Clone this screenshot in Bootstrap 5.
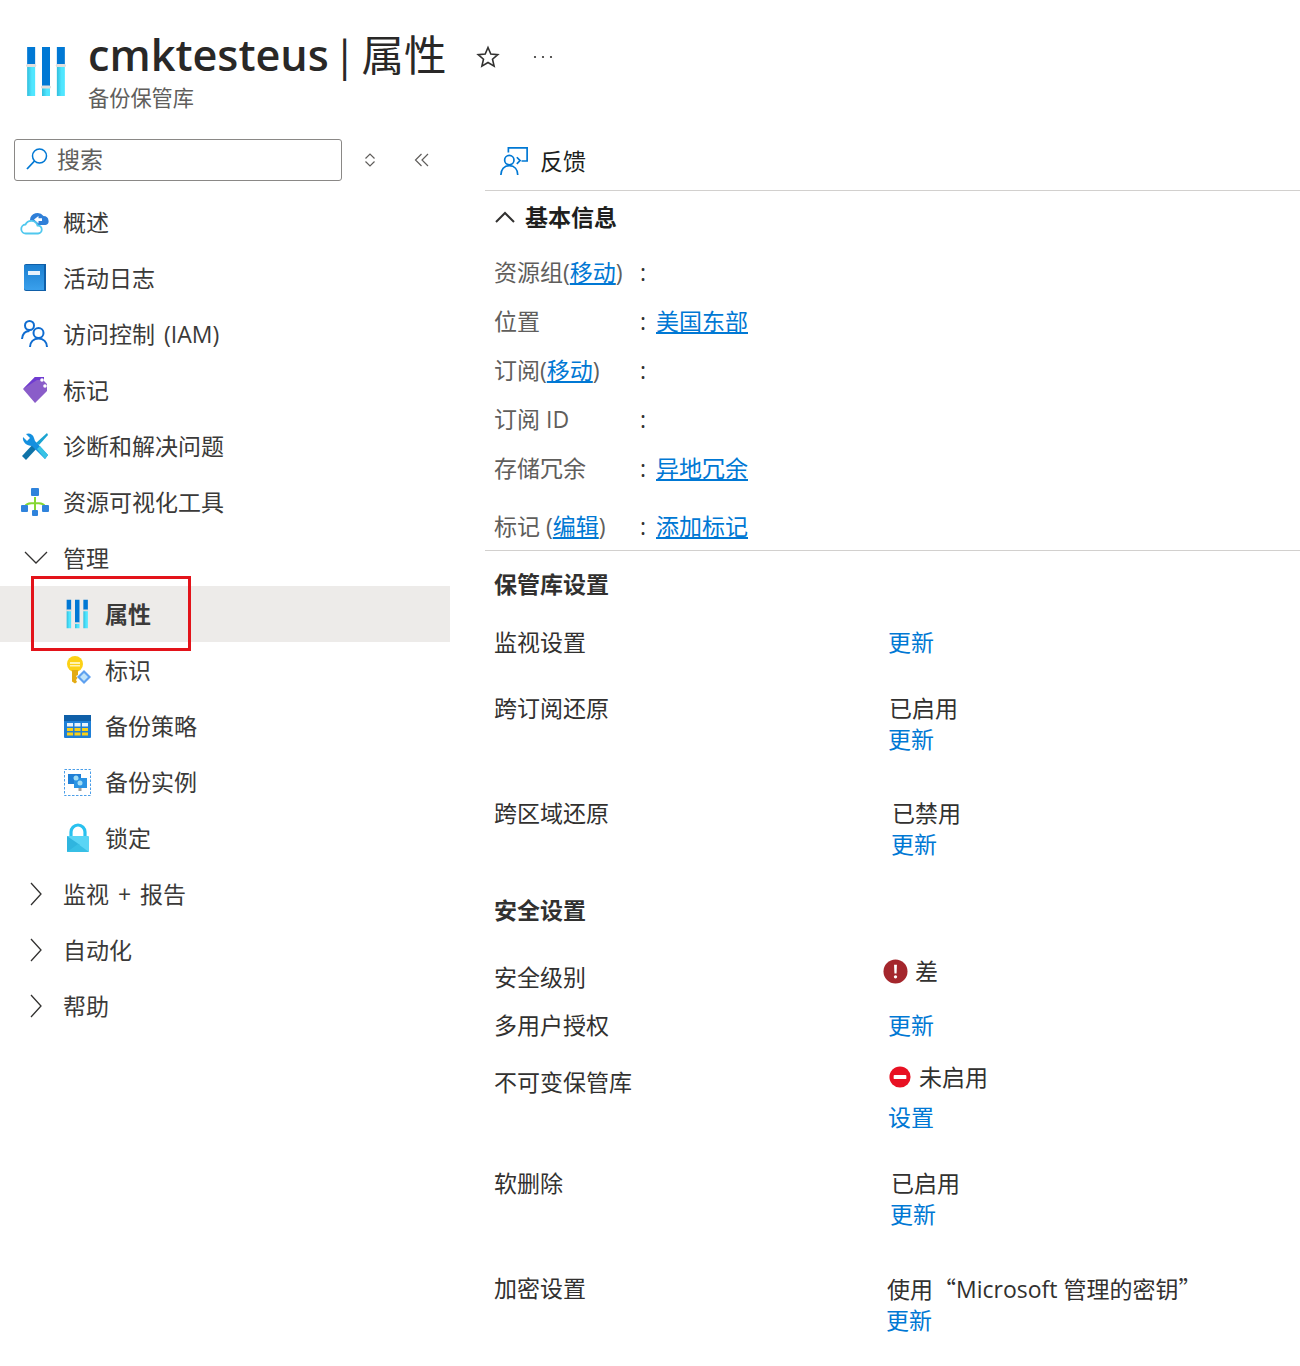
<!DOCTYPE html>
<html lang="zh-CN">
<head>
<meta charset="utf-8">
<title>cmktesteus | 属性</title>
<link href="https://cdn.jsdelivr.net/npm/bootstrap@5.3.0/dist/css/bootstrap.min.css" rel="stylesheet">
<style>
html,body{background:#fff}
body{font-family:"Open Sans","Noto Sans CJK SC",sans-serif;font-size:23px;line-height:30px;color:#323130;width:1300px;height:1366px;overflow:hidden}
a{color:#0078d4}
.page-head{height:139px;padding:33px 0 0 26px}
.vault-logo{margin-top:14px;flex:none}
.page-title{font-size:43.2px;line-height:44px;font-weight:600;margin:0;color:#292827}
.title-thin{font-weight:400;font-size:42.5px;word-spacing:-6px;margin-left:-7px}
.page-sub{font-size:21.2px;line-height:30px;color:#605e5c;margin-top:6px}
.head-text{margin-left:22px}
.head-actions{margin-left:30px;padding-top:8px;gap:32px}
.side-col{width:450px;flex:none}
.main-col{width:815px;margin-left:35px;flex:none}
.search-row{height:42px;padding-left:14px}
.search-box{width:328px;height:42px;border:1px solid #8a8886;border-radius:3px;padding:0 0 2px 10px;color:#605e5c;gap:8px}
.search-tools{margin-left:21px;gap:37px}
.side-list{margin-top:13px;position:relative}
.side-item{height:56px;padding-left:20px;color:#3b3a39;word-spacing:3px}
.side-item.sub-item{padding-left:63px}
.side-item.is-active{background:#edebe9;font-weight:700}
.side-ico{width:30px;height:30px;flex:none;margin-right:13px}
.sub-item .side-ico{margin-right:12px}
.red-mark{position:absolute;left:31px;top:382px;width:160px;height:75px;border:3px solid #e3131a;pointer-events:none}
.tool-row{height:52px;border-bottom:1px solid #d2d0ce;padding:0 0 8px 14px;gap:11px;color:#201f1e}
.group-head{height:52px;padding-left:9px;gap:9px;font-weight:700;color:#201f1e}
.basic-list{padding-left:9px;padding-bottom:9px;border-bottom:1px solid #d2d0ce;margin-top:14px}
.basic-row{height:49px;color:#605e5c}
.basic-row a{text-decoration:underline}
.basic-row.last-basic{height:30px;margin-top:9px}
.basic-key{width:146px;flex:none}
.basic-sep{width:16px;flex:none;color:#323130}
.set-list{padding-left:9px}
.sec-title{font-weight:700;color:#323130;height:76px;padding-top:18px}
.sec-title.tight{height:67px;padding-top:0}
.set-row{color:#323130}
.set-key{width:394px;flex:none}
.two-line>a{display:block;margin-top:1px}
.h48{height:48px}.h57{height:57px}.h66{height:66px}.h97{height:97px}.h101{height:101px}.h105{height:105px}
.nudge-up{margin-top:-5px}
.nudge-up-more{margin-top:-6px}
.nudge-gap{margin-top:10px}
.sl1{margin-left:1px}.sl2{margin-left:2px}.sl3{margin-left:3px}.slm2{margin-left:-2px}.slm5{margin-left:-5px}
.st-icon{width:25px;height:25px;flex:none;margin-right:7px}
.st-icon.wide{width:22px;height:22px;margin-right:8px}
.cjk-q{font-family:"Noto Sans CJK SC",sans-serif}
</style>
</head>
<body>
<svg width="0" height="0" class="position-absolute" aria-hidden="true">
<defs>
<linearGradient id="lg" x1="0" y1="0" x2="1" y2="0"><stop offset="0" stop-color="#32bedd"/><stop offset=".6" stop-color="#50e6ff"/></linearGradient>
<linearGradient id="bookg" x1="0" y1="0" x2="0" y2="1"><stop offset="0" stop-color="#1b7fd0"/><stop offset="1" stop-color="#3aa0ec"/></linearGradient>
<symbol id="vault" viewBox="-1 0 35 49" preserveAspectRatio="none">
<rect x="0" y="0" width="7" height="18" fill="#0078d4"/><rect x="0" y="18" width="7" height="31" fill="url(#lg)"/>
<rect x="-1" y="17" width="9" height="3" rx="1.500" fill="#e1dfdd"/>
<rect x="13" y="0" width="7" height="40" fill="#0078d4"/><rect x="13" y="40" width="7" height="9" fill="url(#lg)"/>
<rect x="12" y="38.500" width="9" height="3" rx="1.500" fill="#e1dfdd"/>
<rect x="26" y="0" width="7" height="18" fill="#0078d4"/><rect x="26" y="18" width="7" height="31" fill="url(#lg)"/>
<rect x="25" y="17" width="9" height="3" rx="1.500" fill="#e1dfdd"/>
</symbol>
</defs>
</svg>

<header class="page-head d-flex">
  <svg width="40" height="49" class="vault-logo" aria-hidden="true"><use href="#vault" width="40" height="49"/></svg>
  <div class="head-text">
    <h1 class="page-title">cmktesteus <span class="title-thin">| 属性</span></h1>
    <div class="page-sub">备份保管库</div>
  </div>
  <div class="head-actions d-flex align-items-start">
    <svg width="24" height="24" viewBox="0 0 24 24" class="mt-1" aria-hidden="true"><path d="M12 2.500l2.800 6.500 7 .6-5.300 4.600 1.600 6.900-6.100-3.600-6.100 3.600 1.600-6.900-5.300-4.600 7-.6z" fill="none" stroke="#323130" stroke-width="1.600"/></svg>
    <svg width="22" height="24" viewBox="0 0 22 24" class="mt-1" aria-hidden="true"><g fill="#323130"><circle cx="3" cy="12" r="1.100"/><circle cx="11" cy="12" r="1.100"/><circle cx="19" cy="12" r="1.100"/></g></svg>
  </div>
</header>

<div class="d-flex">
  <aside class="side-col">
    <div class="search-row d-flex align-items-center">
      <div class="search-box d-flex align-items-center">
        <svg width="24" height="24" viewBox="0 0 24 24" aria-hidden="true"><circle cx="14.500" cy="9" r="7" fill="none" stroke="#0078d4" stroke-width="1.500"/><path d="M9.500 14L2 22" stroke="#0078d4" stroke-width="1.800"/></svg>
        <span>搜索</span>
      </div>
      <div class="search-tools d-flex align-items-center">
        <svg width="14" height="18" viewBox="0 0 14 18" aria-hidden="true"><path d="M2.500 7.500L7 3l4.500 4.500M2.500 10.500L7 15l4.500-4.500" fill="none" stroke="#605e5c" stroke-width="1.200"/></svg>
        <svg width="16" height="16" viewBox="0 0 16 16" aria-hidden="true"><path d="M7.500 2L1.500 8l6 6M14 2L8 8l6 6" fill="none" stroke="#605e5c" stroke-width="1.200"/></svg>
      </div>
    </div>
    <nav class="side-list">
      <div class="side-item d-flex align-items-center"><svg class="side-ico" viewBox="0 0 30 30" aria-hidden="true"><path d="M10 13a7.500 7.500 0 0 1 13.500-4 5 5 0 0 1 5 4.500 3.500 3.500 0 0 1-3 4.500H13z" fill="#2f7fd8"/><path d="M14 12.500l4.500-3.500v2.200h3.500v2.800h-3.500v2.500z" fill="#fff"/><path d="M6 26.500a4.500 4.500 0 0 1-.5-9 6.500 6.500 0 0 1 12 1 4 4 0 0 1 .5 8z" fill="#fff" stroke="#50c8ee" stroke-width="1.800"/></svg><span>概述</span></div>
      <div class="side-item d-flex align-items-center"><svg class="side-ico" viewBox="0 0 30 30" aria-hidden="true"><path d="M4 3a2 2 0 0 1 2-2h20v27H6a2 2 0 0 1-2-2z" fill="#0f5fa8"/><path d="M4 3a1 1 0 0 1 1-1h19v25H6a2 2 0 0 1-2-2z" fill="url(#bookg)"/><rect x="8" y="8" width="12" height="4" fill="#e8f3fc"/></svg><span>活动日志</span></div>
      <div class="side-item d-flex align-items-center"><svg class="side-ico" viewBox="0 0 30 30" aria-hidden="true"><g fill="none" stroke="#0f6cd0" stroke-width="2"><circle cx="9.500" cy="6.500" r="4.500"/><path d="M2 20c.5-5 3-8 7.500-8"/><circle cx="18.500" cy="14" r="5"/><path d="M10 28c0-5 3.500-8.500 8.500-8.500s8.500 3.500 8.500 8.500"/></g></svg><span>访问控制 (IAM)</span></div>
      <div class="side-item d-flex align-items-center"><svg class="side-ico" viewBox="0 0 30 30" aria-hidden="true"><path d="M3 14L15 2h9v4l3 3v7L15 28z" fill="#8a5dc9"/><path d="M3 14L15 2h9v3H17z" fill="#6f3bd1"/><circle cx="22" cy="5" r="1.800" fill="#fff"/><circle cx="25" cy="11" r="1.800" fill="#fff"/></svg><span>标记</span></div>
      <div class="side-item d-flex align-items-center"><svg class="side-ico" viewBox="0 0 30 30" aria-hidden="true"><path d="M27 2l1 2-9 10-3-2z" fill="#1aa3d1"/><path d="M2 25L15 11l4 4L6 29z" fill="#0f73a8"/><path d="M3 6l4 4 3-3-4-4c3-1.500 7 0 8 4l1 3 13 14-3 4L12 15c-5 0-10-4-9-9z" fill="#1490df"/><path d="M17 18l3-3 8 9-3 4z" fill="#39c3e5"/></svg><span>诊断和解决问题</span></div>
      <div class="side-item d-flex align-items-center"><svg class="side-ico" viewBox="0 0 30 30" aria-hidden="true"><path d="M15 10v13M5 20c1-4 6-4 10-4s9 0 10 4" fill="none" stroke="#86d633" stroke-width="2"/><g fill="#2f83dc"><rect x="11" y="1" width="8" height="8" rx="1"/><rect x="1" y="18" width="7" height="7" rx="1"/><rect x="22" y="18" width="7" height="7" rx="1"/><rect x="12" y="23" width="6" height="6" rx="1"/></g></svg><span>资源可视化工具</span></div>
      <div class="side-item d-flex align-items-center"><svg class="side-ico" viewBox="0 0 30 30" aria-hidden="true"><path d="M5 9l11 11L27 9" fill="none" stroke="#323130" stroke-width="1.300"/></svg><span>管理</span></div>
      <div class="side-item sub-item is-active d-flex align-items-center"><svg class="side-ico" viewBox="0 0 30 30" aria-hidden="true"><use href="#vault" x="3" y="0.500" width="22.500" height="29"/></svg><span>属性</span></div>
      <div class="side-item sub-item d-flex align-items-center"><svg class="side-ico" viewBox="0 0 30 30" aria-hidden="true"><circle cx="12" cy="9" r="8" fill="#fcd116"/><path d="M9 15h6v5l-2 1 1.500 2-1.500 2 1 2-2 1.500-3-2z" fill="#e3ab14"/><rect x="7" y="7" width="10" height="2" fill="#fff3b0"/><rect x="7" y="10" width="10" height="1.500" fill="#fff3b0"/><path d="M21 15l7 7-7 7-7-7z" fill="#5ea0ef"/><path d="M21 18l4 4-4 4-4-4z" fill="#bfe3fa"/></svg><span>标识</span></div>
      <div class="side-item sub-item d-flex align-items-center"><svg class="side-ico" viewBox="0 0 30 30" aria-hidden="true"><rect x="1" y="4" width="27" height="23" rx="1" fill="#1f7fd6"/><rect x="1" y="4" width="27" height="6" fill="#0f5fa8"/><g fill="#e8f3fc"><rect x="4" y="12" width="6" height="3.500"/><rect x="11.500" y="12" width="6" height="3.500"/><rect x="19" y="12" width="6" height="3.500"/></g><g fill="#fcd116"><rect x="4" y="17" width="6" height="3"/><rect x="11.500" y="17" width="6" height="3"/><rect x="19" y="17" width="6" height="3"/><rect x="4" y="21.500" width="6" height="3"/><rect x="11.500" y="21.500" width="6" height="3"/><rect x="19" y="21.500" width="6" height="3"/></g></svg><span>备份策略</span></div>
      <div class="side-item sub-item d-flex align-items-center"><svg class="side-ico" viewBox="0 0 30 30" aria-hidden="true"><rect x="1.500" y="2.500" width="26" height="26" fill="none" stroke="#4b9ee8" stroke-width="1" stroke-dasharray="2.500 1.500"/><rect x="5" y="7" width="13" height="10" fill="#1f7fd6"/><rect x="11" y="11" width="13" height="10" fill="#2a93e3"/><circle cx="13" cy="11" r="2.500" fill="#9fdcf5"/><circle cx="17" cy="16" r="2.500" fill="#9fdcf5"/><rect x="15.500" y="21" width="3" height="3" fill="#a19f9d"/></svg><span>备份实例</span></div>
      <div class="side-item sub-item d-flex align-items-center"><svg class="side-ico" viewBox="0 0 30 30" aria-hidden="true"><path d="M8 14V9a7 7 0 0 1 14 0v5" fill="none" stroke="#29c1ef" stroke-width="3.200"/><rect x="4" y="13" width="22" height="16" rx="1" fill="#5ad5f5"/><path d="M4 13l13 9-13 7z" fill="#2fb5df"/><path d="M4 29l11-8 11 8z" fill="#37bfe5"/></svg><span>锁定</span></div>
      <div class="side-item d-flex align-items-center"><svg class="side-ico" viewBox="0 0 30 30" aria-hidden="true"><path d="M11 4l10 11-10 11" fill="none" stroke="#323130" stroke-width="1.300"/></svg><span>监视 + 报告</span></div>
      <div class="side-item d-flex align-items-center"><svg class="side-ico" viewBox="0 0 30 30" aria-hidden="true"><path d="M11 4l10 11-10 11" fill="none" stroke="#323130" stroke-width="1.300"/></svg><span>自动化</span></div>
      <div class="side-item d-flex align-items-center"><svg class="side-ico" viewBox="0 0 30 30" aria-hidden="true"><path d="M11 4l10 11-10 11" fill="none" stroke="#323130" stroke-width="1.300"/></svg><span>帮助</span></div>
      <div class="red-mark"></div>
    </nav>
  </aside>

  <main class="main-col">
    <div class="tool-row d-flex align-items-center">
      <svg width="30" height="30" viewBox="0 0 32 32" aria-hidden="true"><g fill="none" stroke="#0078d4" stroke-width="1.800"><path d="M10 7V2h20v14h-6"/><path d="M19 12l3.500 3.500-3.500 3.500"/><circle cx="11" cy="15" r="5"/><path d="M2 31c0-6 3.500-10 9-10s9 4 9 10"/></g></svg>
      <span>反馈</span>
    </div>
    <div class="group-head d-flex align-items-center">
      <svg width="22" height="22" viewBox="0 0 22 22" aria-hidden="true"><path d="M2 16l9-9 9 9" fill="none" stroke="#323130" stroke-width="2"/></svg>
      <span>基本信息</span>
    </div>
    <div class="basic-list">
      <div class="basic-row d-flex"><div class="basic-key">资源组(<a href="#">移动</a>)</div><div class="basic-sep">:</div></div>
      <div class="basic-row d-flex"><div class="basic-key">位置</div><div class="basic-sep">:</div><a href="#">美国东部</a></div>
      <div class="basic-row d-flex"><div class="basic-key">订阅(<a href="#">移动</a>)</div><div class="basic-sep">:</div></div>
      <div class="basic-row d-flex"><div class="basic-key">订阅 ID</div><div class="basic-sep">:</div></div>
      <div class="basic-row d-flex"><div class="basic-key">存储冗余</div><div class="basic-sep">:</div><a href="#">异地冗余</a></div>
      <div class="basic-row last-basic d-flex"><div class="basic-key">标记 (<a href="#">编辑</a>)</div><div class="basic-sep">:</div><a href="#">添加标记</a></div>
    </div>
    <div class="set-list">
      <div class="sec-title">保管库设置</div>
      <div class="set-row d-flex h66"><div class="set-key">监视设置</div><div><a href="#" class="text-decoration-none">更新</a></div></div>
      <div class="set-row d-flex h105"><div class="set-key">跨订阅还原</div><div class="two-line"><div class="sl1">已启用</div><a href="#" class="text-decoration-none">更新</a></div></div>
      <div class="set-row d-flex h97"><div class="set-key">跨区域还原</div><div class="two-line sl3"><div class="sl1">已禁用</div><a href="#" class="text-decoration-none">更新</a></div></div>
      <div class="sec-title tight">安全设置</div>
      <div class="set-row d-flex h48"><div class="set-key">安全级别</div><div class="d-flex align-items-center slm5 nudge-up-more align-self-start"><svg class="st-icon" viewBox="0 0 26 26" aria-hidden="true"><circle cx="13" cy="13" r="12.500" fill="#a4262c"/><path d="M11.500 6h3l-.4 9h-2.200z" fill="#fff"/><circle cx="13" cy="18.500" r="1.700" fill="#fff"/></svg><span>差</span></div></div>
      <div class="set-row d-flex h57"><div class="set-key">多用户授权</div><div><a href="#" class="text-decoration-none">更新</a></div></div>
      <div class="set-row d-flex h101"><div class="set-key">不可变保管库</div><div class="nudge-up"><div class="d-flex align-items-center sl1"><svg class="st-icon wide" viewBox="0 0 26 26" aria-hidden="true"><circle cx="13" cy="13" r="12.500" fill="#e81123"/><rect x="5.500" y="10.500" width="15" height="5" rx="1" fill="#fff"/></svg><span>未启用</span></div><div class="nudge-gap"><a href="#" class="text-decoration-none">设置</a></div></div></div>
      <div class="set-row d-flex h105"><div class="set-key">软删除</div><div class="two-line sl2"><div class="sl1">已启用</div><a href="#" class="text-decoration-none">更新</a></div></div>
      <div class="set-row d-flex h105"><div class="set-key">加密设置</div><div class="two-line slm2"><div class="sl1">使用<span class="cjk-q">“</span>Microsoft 管理的密钥<span class="cjk-q">”</span></div><a href="#" class="text-decoration-none">更新</a></div></div>
    </div>
  </main>
</div>
<script src="https://cdn.jsdelivr.net/npm/bootstrap@5.3.0/dist/js/bootstrap.bundle.min.js"></script>
</body>
</html>
